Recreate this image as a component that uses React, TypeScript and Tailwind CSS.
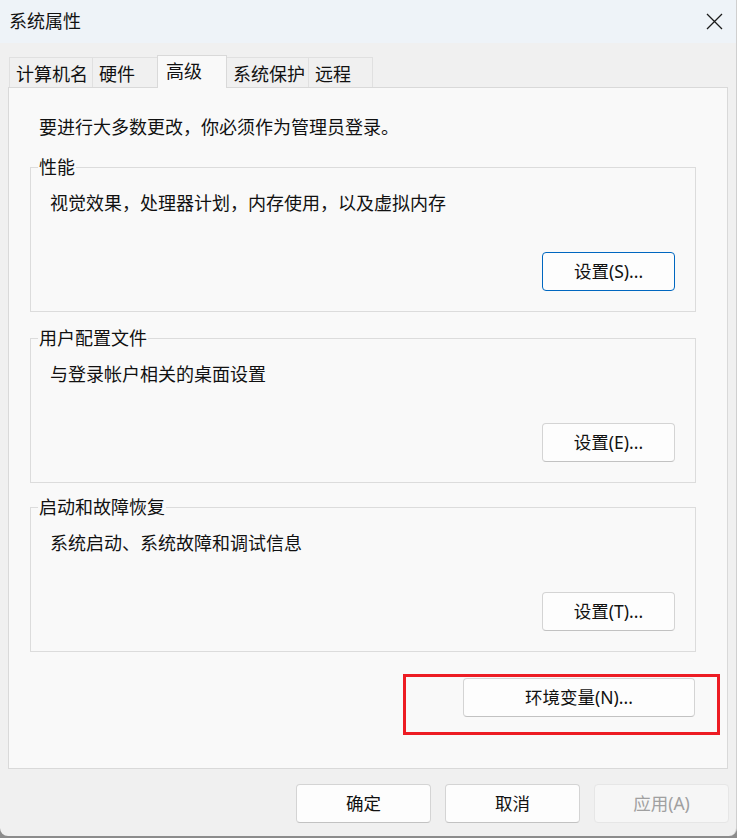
import React from 'react';

const font = { fontFamily: '"Noto Sans", "Noto Sans CJK SC", sans-serif' };

const tabs = [
  { label: '计算机名', w: 'w-[84px]' },
  { label: '硬件', w: 'w-[66px]' },
  { label: '高级', w: 'w-[70px]', active: true },
  { label: '系统保护', w: 'w-[83px]' },
  { label: '远程', w: 'w-[65px]' },
];

const WinButton = ({
  children,
  focused,
  disabled,
  className = '',
}: {
  children: React.ReactNode;
  focused?: boolean;
  disabled?: boolean;
  className?: string;
}) => (
  <button
    disabled={disabled}
    className={
      'h-[39px] rounded-[4px] border text-[17.5px] ' +
      (disabled
        ? 'border-[#e6e6e6] bg-[#f6f6f6] text-[#a0a0a0] '
        : focused
        ? 'border-[#0067c0] bg-[#fdfdfd] text-[#111] '
        : 'border-[#d4d4d4] border-b-[#c2c2c2] bg-[#fdfdfd] text-[#111] ') +
      className
    }
  >
    {children}
  </button>
);

const Group = ({
  title,
  desc,
  button,
  focused,
  className = '',
}: {
  title: string;
  desc: string;
  button: string;
  focused?: boolean;
  className?: string;
}) => (
  <fieldset className={'ml-[21px] mr-[31px] border border-[#dcdcdc] pt-[12px] pb-[20px] ' + className}>
    <legend className="ml-[7px] px-[1px] text-[18px] leading-[24px] text-[#111]">{title}</legend>
    <p className="pl-[19px] text-[18px] leading-[24px] text-[#111]">{desc}</p>
    <div className="mt-[37px] flex justify-end pr-[20px]">
      <WinButton focused={focused} className="w-[133px]">
        {button}
      </WinButton>
    </div>
  </fieldset>
);

export default function App() {
  return (
    <div className="h-[838px] w-[737px] bg-[#8c8c8c]" style={font}>
      <div className="flex h-[836px] w-[737px] flex-col overflow-hidden rounded-b-[8px] border-r border-[#cfcfcf] bg-[#f0f0f0]">
        {/* title bar */}
        <div className="flex h-[43px] items-center justify-between bg-[#eef3f8] pl-[9px] pr-[12px]">
          <span className="text-[18px] text-[#111]">系统属性</span>
          <svg width="17" height="17" viewBox="0 0 17 17" className="mr-[1px]">
            <path d="M1 1 L16 16 M16 1 L1 16" stroke="#1b1b1b" strokeWidth="1.3" />
          </svg>
        </div>

        {/* tabs */}
        <div className="mt-[12px] flex items-end pl-[9px]">
          {tabs.map((t) =>
            t.active ? (
              <div
                key={t.label}
                className={
                  t.w +
                  ' relative z-10 -mb-px -ml-px h-[33px] border border-b-0 border-[#d9d9d9] bg-[#f9f9f9] pl-[8px] pt-[1px] text-[18px] leading-[28px] text-[#111]'
                }
              >
                {t.label}
              </div>
            ) : (
              <div
                key={t.label}
                className={
                  t.w +
                  ' -ml-px h-[30px] border border-b-0 border-[#e0e0e0] bg-[#f0f0f0] pl-[6px] pt-[2px] text-[18px] leading-[28px] text-[#111] first:ml-0'
                }
              >
                {t.label}
              </div>
            )
          )}
        </div>

        {/* panel */}
        <div className="ml-[8px] flex h-[682px] w-[720px] flex-col border border-[#d9d9d9] bg-[#f9f9f9]">
          <p className="mt-[27px] pl-[30px] text-[18px] leading-[24px] text-[#111]">
            要进行大多数更改，你必须作为管理员登录。
          </p>
          <Group
            className="mt-[16px]"
            title="性能"
            desc="视觉效果，处理器计划，内存使用，以及虚拟内存"
            button="设置(S)..."
            focused
          />
          <Group
            className="mt-[14px]"
            title="用户配置文件"
            desc="与登录帐户相关的桌面设置"
            button="设置(E)..."
          />
          <Group
            className="mt-[12px]"
            title="启动和故障恢复"
            desc="系统启动、系统故障和调试信息"
            button="设置(T)..."
          />
          <div className="mt-[22px] flex justify-end pr-[7px]">
            <div className="border-[3px] border-[#ed1c24] pb-[15px] pl-[57px] pr-[22px] pt-[1px]">
              <WinButton className="w-[232px]">环境变量(N)...</WinButton>
            </div>
          </div>
        </div>

        {/* footer buttons */}
        <div className="mt-[15px] flex justify-end gap-[14px] pr-[7px]">
          <WinButton className="w-[135px]">确定</WinButton>
          <WinButton className="w-[135px]">取消</WinButton>
          <WinButton disabled className="w-[135px]">
            应用(A)
          </WinButton>
        </div>
      </div>
    </div>
  );
}
